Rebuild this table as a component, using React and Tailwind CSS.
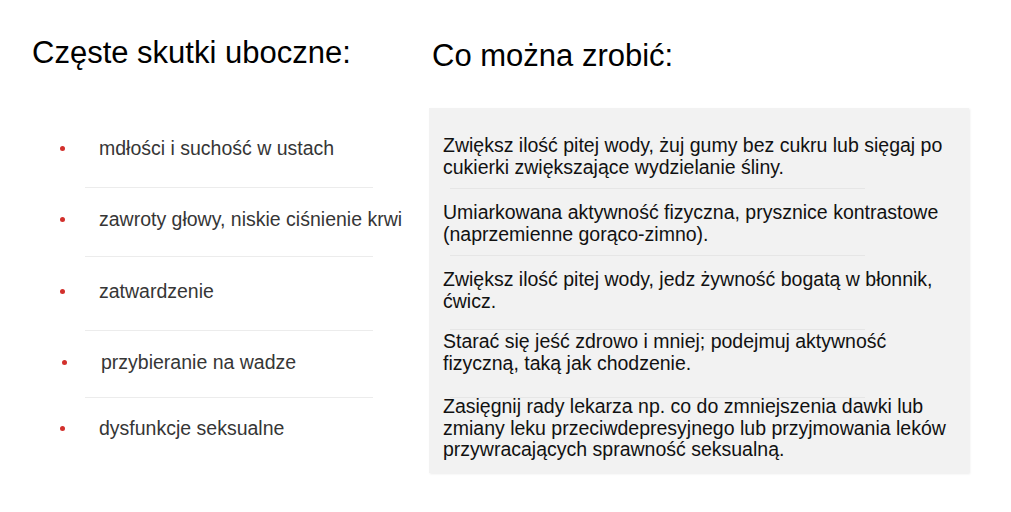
import React from 'react';

const sideEffects = [
    { text: 'mdłości i suchość w ustach', top: 'mt-[70px]', sep: 'mt-[27px]', shift: '' },
    { text: 'zawroty głowy, niskie ciśnienie krwi', top: 'mt-[21px]', sep: 'mt-[26px]', shift: '' },
    { text: 'zatwardzenie', top: 'mt-[24px]', sep: 'mt-[27px]', shift: '' },
    { text: 'przybieranie na wadze', top: 'mt-[21px]', sep: 'mt-[24px]', shift: 'ml-[2px]' },
    { text: 'dysfunkcje seksualne', top: 'mt-[20px]', sep: null, shift: '' },
];

const tips = [
    {
        text: 'Zwiększ ilość pitej wody, żuj gumy bez cukru lub sięgaj po cukierki zwiększające wydzielanie śliny.',
        top: 'mt-[27px]',
        sep: 'mt-[10px]',
    },
    {
        text: 'Umiarkowana aktywność fizyczna, prysznice kontrastowe (naprzemienne gorąco-zimno).',
        top: 'mt-[13px]',
        sep: 'mt-[10px]',
    },
    {
        text: 'Zwiększ ilość pitej wody, jedz żywność bogatą w błonnik, ćwicz.',
        top: 'mt-[13px]',
        sep: 'mt-[17px]',
    },
    {
        text: 'Starać się jeść zdrowo i mniej; podejmuj aktywność fizyczną, taką jak chodzenie.',
        top: 'mt-[1px]',
        sep: 'mt-[23px]',
    },
    {
        text: 'Zasięgnij rady lekarza np. co do zmniejszenia dawki lub zmiany leku przeciwdepresyjnego lub przyjmowania leków przywracających sprawność seksualną.',
        top: '-mt-[2px]',
        sep: null,
    },
];

function App() {
    return (
        <div className="w-[1011px] h-[512px] bg-white flex font-['Liberation_Sans',Arial,sans-serif]">
            {/* left column: side effects */}
            <div className="w-[429px] pl-[32px] flex flex-col">
                <h2 className="mt-[37px] text-[31px] leading-[31px] text-black">
                    Częste skutki uboczne:
                </h2>
                <ul className="flex flex-col">
                    {sideEffects.map((item) => (
                        <li key={item.text} className="flex flex-col">
                            <div className={`${item.top} ${item.shift} flex items-center`}>
                                <span className="ml-[28px] w-[5px] h-[5px] rounded-full bg-[#d2302c]" />
                                <span className="ml-[34px] text-[19.5px] leading-[21.5px] text-[#363636]">
                                    {item.text}
                                </span>
                            </div>
                            {item.sep && (
                                <div className={`${item.sep} ml-[53px] w-[288px] h-px bg-[#ececec]`} />
                            )}
                        </li>
                    ))}
                </ul>
            </div>

            {/* right column: what can be done */}
            <div className="w-[541px] flex flex-col">
                <h2 className="mt-[40px] pl-[3px] text-[31px] leading-[31px] text-black">
                    Co można zrobić:
                </h2>
                <div className="mt-[37px] w-[540px] h-[365px] bg-[#f2f2f2] shadow-[1px_1px_2px_rgba(0,0,0,0.08)] pl-[14px] pr-[12px] flex flex-col">
                    {tips.map((tip) => (
                        <div key={tip.text} className="flex flex-col">
                            <p className={`${tip.top} text-[19.5px] leading-[21.5px] text-[#111]`}>
                                {tip.text}
                            </p>
                            {tip.sep && (
                                <div className={`${tip.sep} ml-[7px] w-[415px] h-px bg-[#e6e6e6]`} />
                            )}
                        </div>
                    ))}
                </div>
            </div>
        </div>
    );
}

export default App;
